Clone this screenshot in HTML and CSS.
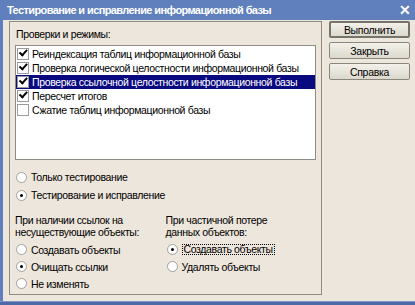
FILE: index.html
```html
<!doctype html>
<html lang="ru">
<head>
	<meta charset="UTF-8" />
	<title>Тестирование и исправление информационной базы</title>
	<link rel="stylesheet" href="styles.css">
</head>
<body>
    <div class="window">
        <div class="titlebar">
            <span class="title">Тестирование и исправление информационной базы</span>
            <span class="close">✕</span>
        </div>
        <div class="client">
            <div class="group">
                <div class="caption">Проверки и режимы:</div>
                <ul class="checklist">
                    <li><span class="check on"></span>Реиндексация таблиц информационной базы</li>
                    <li><span class="check on"></span>Проверка логической целостности информационной базы</li>
                    <li class="selected"><span class="check on"></span>Проверка ссылочной целостности информационной базы</li>
                    <li><span class="check on"></span>Пересчет итогов</li>
                    <li><span class="check"></span>Сжатие таблиц информационной базы</li>
                </ul>
                <div class="mode">
                    <div class="radio"><span class="dot"></span>Только тестирование</div>
                    <div class="radio"><span class="dot on"></span>Тестирование и исправление</div>
                </div>
                <div class="options">
                    <div class="col">
                        <div class="col_title">При наличии ссылок на<br>несуществующие объекты:</div>
                        <div class="radio"><span class="dot"></span>Создавать объекты</div>
                        <div class="radio"><span class="dot on"></span>Очищать ссылки</div>
                        <div class="radio"><span class="dot"></span>Не изменять</div>
                    </div>
                    <div class="col">
                        <div class="col_title">При частичной потере<br>данных объектов:</div>
                        <div class="radio"><span class="dot on"></span><span class="focus">Создавать объекты</span></div>
                        <div class="radio"><span class="dot"></span>Удалять объекты</div>
                    </div>
                </div>
            </div>
            <div class="buttons">
                <button class="btn default">Выполнить</button>
                <button class="btn">Закрыть</button>
                <button class="btn">Справка</button>
            </div>
        </div>
        <div class="bottom"></div>
    </div>
</body>
</html>
```
FILE: styles.css
```css
* { margin: 0; padding: 0; box-sizing: border-box; }
html, body { width: 415px; height: 305px; overflow: hidden; }
body { font-family: "Liberation Sans", Arial, sans-serif; font-size: 10.5px; letter-spacing: -0.35px; color: #000; }
ul { list-style: none; }

.window { width: 415px; height: 305px; display: flex; flex-direction: column; background: #ede6dc; }

.titlebar { height: 20px; display: flex; align-items: center; padding: 0 4px 0 7px; background: #5f80bd; color: #fff; font-size: 11px; font-weight: bold; letter-spacing: -0.6px; }
.titlebar .close { margin-left: auto; font-size: 14px; letter-spacing: 0; }

.client { flex: 1; display: flex; align-items: flex-start; padding: 1px 0 0 6px; border-left: 3px solid #5f80bd; }
.bottom { height: 4px; background: #4d6aa6; border-top: 1px solid #7d97c8; }

.group { width: 313px; height: 274px; padding: 0 5px; border: 1px solid #918c7f; }
.caption { height: 13px; line-height: 13px; margin: 6px 0 0 1px; }

.checklist { height: 115px; margin-top: 4px; padding: 1px 0; background: #fff; border: 1px solid #8e8c84; }
.checklist li { height: 14px; display: flex; align-items: center; padding-left: 1px; white-space: nowrap; overflow: hidden; }
.checklist li.selected { background: #0a0a80; color: #fff; }
.check { width: 12px; height: 12px; flex: none; margin-right: 3px; background: #fff; border: 1px solid #9b9b9b; position: relative; }
.check.on::after { content: ""; position: absolute; left: 2px; top: 1px; width: 6px; height: 3px; border: solid #000; border-width: 0 0 2px 2px; transform: rotate(-48deg); transform-origin: 3px 3px; }

.mode { margin-top: 8px; }
.radio { height: 18px; display: flex; align-items: center; padding-left: 1px; white-space: nowrap; }
.dot { width: 11px; height: 11px; flex: none; margin-right: 4px; border: 1px solid #a3a09a; border-radius: 50%; background: #fff; position: relative; }
.dot.on::after { content: ""; position: absolute; left: 3px; top: 3px; width: 3px; height: 3px; border-radius: 50%; background: #000; }

.options { display: flex; margin-top: 10px; }
.col { width: 152px; }
.col .col_title { line-height: 12px; margin-bottom: 3px; }
.col .radio { height: 17px; }
.focus { padding: 0 1px; border: 1px dotted #000; line-height: 9px; }

.buttons { display: flex; flex-direction: column; gap: 4px; margin-left: 7px; }
.btn { width: 81px; height: 17px; font-family: inherit; font-size: 10.5px; letter-spacing: -0.3px; color: #000; background: linear-gradient(#f3f1ea, #dcd8cc); border: 1px solid #8a877e; border-radius: 2px; }
.btn.default { border: 2px solid #76746c; }
```
